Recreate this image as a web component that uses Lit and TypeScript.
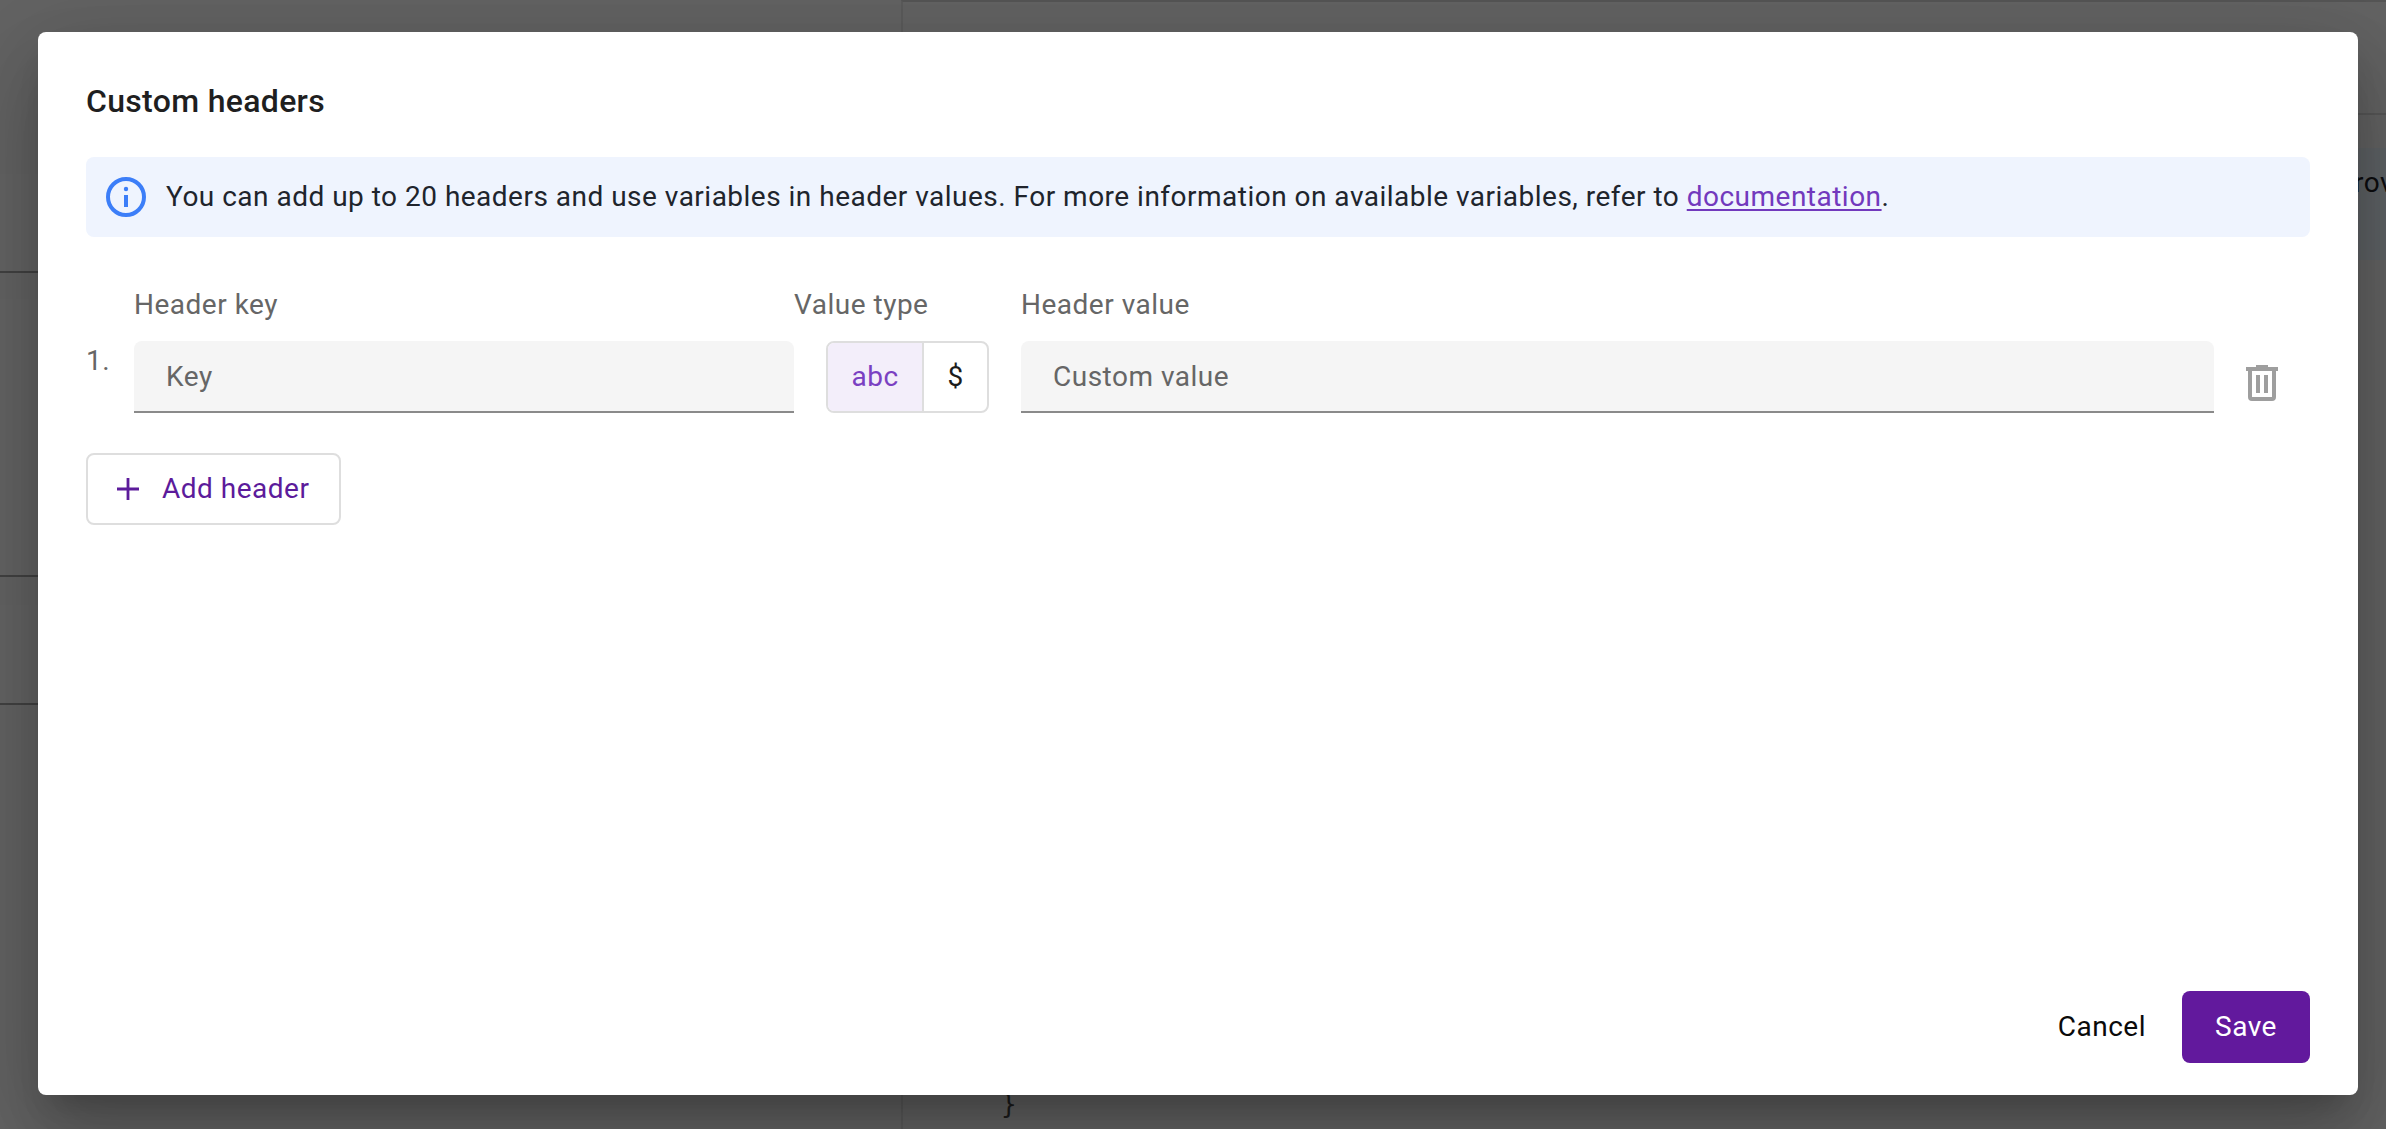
import { LitElement, html, css } from "lit";
import { customElement } from "lit/decorators.js";

@customElement("page-backdrop")
class PageBackdrop extends LitElement {
  static styles = css`
    :host { display: flex; width: 100%; height: 100%; background: #636363; }
    .left { width: 901px; flex: none; box-sizing: border-box; padding-top: 174px; display: flex; flex-direction: column; }
    .field { box-sizing: border-box; border-bottom: 2px solid #424242; background: #646464; flex: none; }
    .f1 { height: 99px; }
    .f2 { height: 278px; margin-top: 26px; }
    .f3 { height: 100px; margin-top: 28px; }
    .right { flex: 1; min-width: 0; border-left: 2px solid #5b5b5b; border-top: 2px solid #555; display: flex; flex-direction: column; }
    .bar { height: 111px; border-bottom: 2px solid #575757; flex: none; }
    .row { margin-top: 33px; height: 112px; flex: none; background: #5e6265; display: flex; justify-content: flex-end; align-items: center; overflow: hidden; }
    .row span { font: 28px/40px Roboto, sans-serif; letter-spacing: 0.5px; color: #0c0c0e; margin-right: -57px; padding-bottom: 42px; }
    .code { margin-top: auto; padding: 0 0 9px 98px; font: 26px/32px "DejaVu Sans Mono", monospace; color: #1c1c1c; }
  `;
  render() {
    return html`
      <div class="left">
        <div class="field f1"></div>
        <div class="field f2"></div>
        <div class="field f3"></div>
      </div>
      <div class="right">
        <div class="bar"></div>
        <div class="row"><span>Provider</span></div>
        <div class="code">}</div>
      </div>
    `;
  }
}

@customElement("app-root")
class AppRoot extends LitElement {
  static styles = css`
    :host { display: block; position: relative; width: 2386px; height: 1129px; overflow: hidden; font: 28px/40px Roboto, sans-serif; letter-spacing: 0.5px; color: #1f1f1f; }
    * { box-sizing: border-box; }
    .dialog {
      position: absolute; left: 38px; top: 32px; width: 2320px; height: 1063px;
      background: #fff; border-radius: 8px; padding: 49px 48px 32px; display: flex; flex-direction: column;
      box-shadow: 0 22px 30px -14px rgba(0,0,0,.2), 0 48px 76px 6px rgba(0,0,0,.14), 0 18px 92px 16px rgba(0,0,0,.12);
    }
    .title { margin: 0; font-size: 32px; line-height: 40px; font-weight: 500; letter-spacing: 0.32px; }
    .banner { margin-top: 36px; height: 80px; flex: none; border-radius: 8px; background: #eff4fe; display: flex; align-items: center; padding: 0 20px; gap: 20px; color: #20242c; letter-spacing: 0.487px; }
    .banner svg { display: block; width: 40px; height: 40px; flex: none; }
    .banner a { color: #7239bd; text-decoration: underline; text-decoration-thickness: 2px; text-underline-offset: 3px; }
    .grid { margin-top: 48px; display: grid; grid-template-columns: 48px 660px 227px 1193px 96px; grid-template-rows: 56px 72px; color: #666; }
    .label { line-height: 40px; }
    .num { line-height: 40px; }
    .input { height: 72px; background: #f5f5f5; border-bottom: 2px solid #8a8a8a; border-radius: 8px 8px 0 0; padding: 0 32px; line-height: 71px; }
    .toggle { margin-left: 32px; width: 163px; height: 72px; border: 2px solid #dedede; border-radius: 8px; display: flex; overflow: hidden; line-height: 68px; }
    .opt { text-align: center; color: #1c1c1c; flex: 1; }
    .opt.on { flex: none; width: 96px; border-right: 2px solid #dedede; background: #f3eefa; color: #7a40c2; }
    .trash { display: flex; padding: 24px 0 0 32px; }
    .trash svg { display: block; width: 32px; height: 36px; }
    .add { margin-top: 40px; width: 255px; height: 72px; flex: none; border: 2px solid #dedede; border-radius: 8px; display: flex; align-items: center; padding-left: 29px; gap: 23px; color: #5c1b9b; }
    .add svg { display: block; width: 22px; height: 22px; }
    .actions { margin-top: auto; display: flex; justify-content: flex-end; align-items: center; gap: 36px; height: 72px; color: #0a0a0a; }
    .save { width: 128px; height: 72px; line-height: 71px; border-radius: 8px; background: #62199d; color: #fff; text-align: center; }
    .cancel { height: 72px; line-height: 71px; }
  `;
  render() {
    return html`
      <page-backdrop></page-backdrop>
      <section class="dialog">
        <h2 class="title">Custom headers</h2>
        <div class="banner">
          <svg viewBox="0 0 40 40" fill="none">
            <circle cx="20" cy="20" r="18" stroke="#3c7ef8" stroke-width="4" />
            <path d="M20 18v12" stroke="#3c7ef8" stroke-width="4" />
            <circle cx="20" cy="12" r="2.2" fill="#3c7ef8" />
          </svg>
          <span>You can add up to 20 headers and use variables in header values. For more information on available variables, refer to <a>documentation</a>.</span>
        </div>
        <div class="grid">
          <span></span>
          <span class="label">Header key</span>
          <span class="label">Value type</span>
          <span class="label">Header value</span>
          <span></span>
          <span class="num">1.</span>
          <div class="input">Key</div>
          <div class="toggle"><span class="opt on">abc</span><span class="opt">$</span></div>
          <div class="input">Custom value</div>
          <div class="trash">
            <svg viewBox="0 0 32 36" fill="#9e9e9e">
              <path fill-rule="evenodd" d="M10 0h12v2h10v4h-2v26a4 4 0 0 1-4 4H6a4 4 0 0 1-4-4V6H0V2h10zM6 6v26h20V6z" />
              <path d="M10 10h4v18h-4zM18 10h4v18h-4z" />
            </svg>
          </div>
        </div>
        <div class="add">
          <svg viewBox="0 0 22 22" stroke="#5c1b9b" stroke-width="2.8"><path d="M11 0v22M0 11h22" /></svg>
          <span>Add header</span>
        </div>
        <div class="actions">
          <span class="cancel">Cancel</span>
          <span class="save">Save</span>
        </div>
      </section>
    `;
  }
}
